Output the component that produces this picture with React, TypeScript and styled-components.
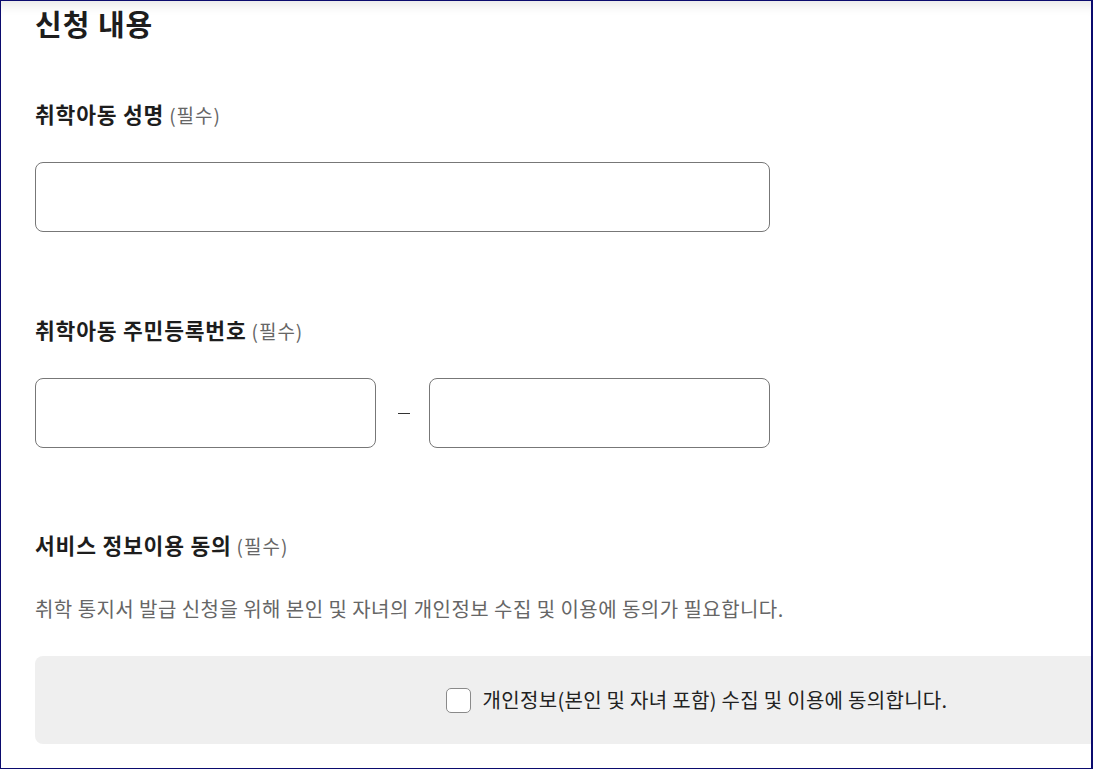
import React from "react";
import styled, { createGlobalStyle } from "styled-components";

const GlobalStyle = createGlobalStyle`
  html, body { margin: 0; padding: 0; background: #ffffff; }
  body { font-family: "Noto Sans CJK KR", "Noto Sans", sans-serif; }
  * { box-sizing: border-box; }
`;

const Frame = styled.div`
  width: 1093px;
  height: 769px;
  border: 1px solid #0b0b6e;
  border-right-width: 2px;
  overflow: hidden;
  background: #ffffff;
  box-shadow: inset 0 14px 12px -10px rgba(0, 0, 0, 0.1);
`;

const Content = styled.div`
  width: 1357px;
  padding-left: 34px;
  display: flex;
  flex-direction: column;
`;

const Title = styled.h2`
  margin: 0;
  font-size: 29px;
  line-height: 44px;
  font-weight: 700;
  color: #1d1d1d;
  letter-spacing: 1px;
`;

const Label = styled.div<{ $top: number }>`
  margin-top: ${(p) => p.$top}px;
  font-size: 21.5px;
  line-height: 30px;
  font-weight: 700;
  color: #1d1d1d;
  letter-spacing: 0.8px;
`;

const Required = styled.span`
  font-size: 19px;
  font-weight: 400;
  color: #666666;
  margin-left: 5px;
  letter-spacing: 1px;
`;

const TextInput = styled.input<{ $width: number }>`
  width: ${(p) => p.$width}px;
  height: 70px;
  border: 1px solid #777777;
  border-radius: 8px;
  background: #ffffff;
  padding: 0 16px;
  font-size: 18px;
  font-family: inherit;
  outline: none;
`;

const Field = styled.div<{ $top: number }>`
  margin-top: ${(p) => p.$top}px;
  display: flex;
  align-items: center;
`;

const DashWrap = styled.div`
  width: 53px;
  display: flex;
  justify-content: center;
`;

const Dash = styled.span`
  display: block;
  width: 12px;
  height: 1px;
  background: #333333;
  margin-left: 2px;
`;

const Description = styled.p`
  margin: 34px 0 0;
  font-size: 20px;
  line-height: 28px;
  color: #666666;
  letter-spacing: 0.45px;
`;

const AgreeBox = styled.div`
  margin-top: 33px;
  height: 88px;
  background: #efefef;
  border-radius: 8px;
  display: flex;
  align-items: center;
  justify-content: center;
  gap: 12px;
`;

const CheckBox = styled.span`
  width: 25px;
  height: 25px;
  border: 1px solid #8a8a8a;
  border-radius: 5px;
  background: #ffffff;
  flex-shrink: 0;
`;

const AgreeText = styled.span`
  font-size: 20px;
  line-height: 28px;
  color: #222222;
  letter-spacing: 0.3px;
`;

export default function App() {
  return (
    <>
      <GlobalStyle />
      <Frame>
        <Content>
          <Title>신청 내용</Title>

          <Label $top={54}>
            취학아동 성명<Required>(필수)</Required>
          </Label>
          <Field $top={32}>
            <TextInput $width={735} />
          </Field>

          <Label $top={83}>
            취학아동 주민등록번호<Required>(필수)</Required>
          </Label>
          <Field $top={32}>
            <TextInput $width={341} />
            <DashWrap>
              <Dash />
            </DashWrap>
            <TextInput $width={341} />
          </Field>

          <Label $top={82}>
            서비스 정보이용 동의<Required>(필수)</Required>
          </Label>
          <Description>
            취학 통지서 발급 신청을 위해 본인 및 자녀의 개인정보 수집 및 이용에 동의가 필요합니다.
          </Description>
          <AgreeBox>
            <CheckBox />
            <AgreeText>개인정보(본인 및 자녀 포함) 수집 및 이용에 동의합니다.</AgreeText>
          </AgreeBox>
        </Content>
      </Frame>
    </>
  );
}
